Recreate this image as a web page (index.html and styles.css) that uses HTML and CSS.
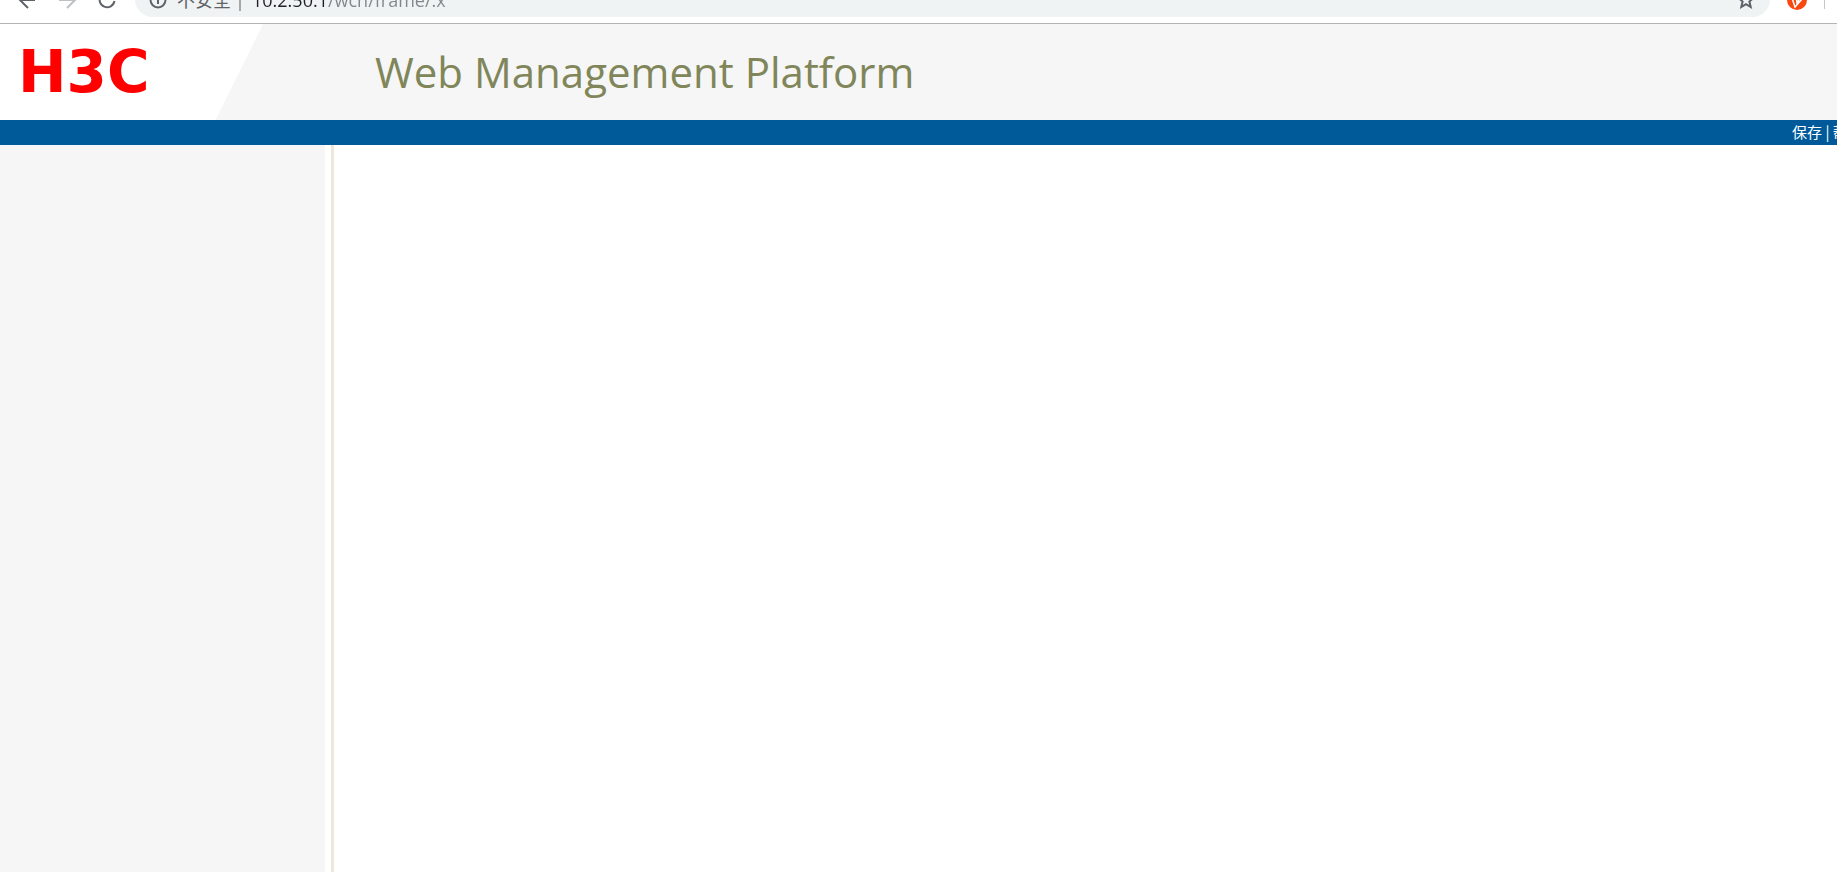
FILE: index.html
```html
<!DOCTYPE html>
<html lang="zh-CN">

	<head>
		<meta charset="UTF-8">
		<meta name="viewport" content="width=device-width, initial-scale=1.0">
		<title>Web Management Platform</title>
		<link rel="stylesheet" href="styles.css">
	</head>

	<body>

		<!-- 浏览器工具栏 -->
		<div class="toolbar">
			<button class="tool" type="button" aria-label="后退">
				<svg width="20" height="20" viewBox="0 0 20 20"><path d="M19 10H4M12 2l-8 8 8 8" /></svg>
			</button>
			<button class="tool disabled" type="button" aria-label="前进" disabled>
				<svg width="20" height="20" viewBox="0 0 20 20"><path d="M3 10h15M11 2l8 8-8 8" /></svg>
			</button>
			<button class="tool" type="button" aria-label="刷新">
				<svg width="20" height="20" viewBox="0 0 20 20"><path d="M18.500 11A7.500 7.500 0 1 1 16.500 4.500L18 6M18.500 1v6h-6" /></svg>
			</button>
			<div class="address">
				<svg class="info" width="18" height="18" viewBox="0 0 18 18"><circle cx="9" cy="9" r="7.500" /><path d="M9 8v5M9 4.500v2" /></svg>
				<label class="secure" for="url">不安全</label>
				<input class="url" id="url" type="text" value="10.2.50.1/wcn/frame/.x" spellcheck="false">
				<button class="star" type="button" aria-label="收藏">
					<svg width="18" height="18" viewBox="0 0 18 18"><path d="M9 1.500l2.100 5 5.400.5-4.100 3.500 1.300 5.500L9 13.200 4.300 16l1.300-5.500L1.500 7l5.400-.5z" /></svg>
				</button>
			</div>
			<button class="ext" type="button" aria-label="扩展程序">
				<svg width="20" height="20" viewBox="0 0 20 20"><circle cx="10" cy="10" r="10" fill="#f9480f" /><path d="M5 8l3 9L16 8M9 5l1 8L15 5" fill="none" stroke="#fff" stroke-width="1.500" /></svg>
			</button>
			<span class="divider"></span>
		</div>

		<!-- 页头 -->
		<div class="header">
			<div class="brand">H3C</div>
			<h1 class="title">Web Management Platform</h1>
		</div>

		<!-- 操作栏 -->
		<div class="navbar">
			<div class="links">
				<a href="#save">保存</a> | <a href="#help">帮助</a>
			</div>
		</div>

		<div class="container">
			<div class="sidebar"></div>
			<div class="content"></div>
		</div>

	</body>

</html>
```
FILE: styles.css
```css
* {
	box-sizing: border-box;
}

body {
	display: flex;
	flex-direction: column;
	min-height: 100vh;
	margin: 0;
	background-color: #fff;
	font-family: "Open Sans", "Noto Sans CJK SC", sans-serif;
	overflow-x: hidden;
}

button {
	padding: 0;
	border: 0;
	background: none;
}

svg {
	display: block;
}

/* 工具栏只露出下半部分 */
.toolbar {
	display: flex;
	align-items: flex-end;
	height: 24px;
	padding: 0 12px 6px 16px;
	border-bottom: 1px solid #b4b4b4;
	overflow: hidden;
}

.tool {
	display: flex;
	align-items: center;
	height: 34px;
	margin-right: 20px;
}

.tool svg {
	fill: none;
	stroke: #5f6368;
	stroke-width: 2;
}

.disabled svg {
	stroke: #bdc1c6;
}

.address {
	display: flex;
	flex: 1;
	align-items: center;
	height: 35px;
	margin-left: -1px;
	padding: 0 15px 0 14px;
	border-radius: 18px;
	background-color: #eff3f4;
}

.info,
.star svg {
	fill: none;
	stroke: #5f6368;
	stroke-width: 2;
}

.secure {
	margin-left: 10px;
	padding-right: 8px;
	border-right: 2px solid #a5a8ab;
	font-size: 18px;
	line-height: 22px;
	color: #5f6368;
}

/* 主机名深色，路径浅色 */
.url {
	flex: 1;
	min-width: 0;
	margin-left: 11px;
	padding: 0;
	border: 0;
	font-family: inherit;
	font-size: 18px;
	line-height: 22px;
	color: transparent;
	background: linear-gradient(to right, #202124 74px, #80868b 74px);
	-webkit-background-clip: text;
	background-clip: text;
}

.ext {
	display: flex;
	align-items: center;
	height: 35px;
	margin-left: 17px;
}

.divider {
	width: 1px;
	height: 20px;
	margin: 0 0 8px 17px;
	background-color: #c4c7ca;
}

.header {
	display: flex;
	align-items: center;
	height: 96px;
	background-color: #f6f6f6;
}

.brand {
	width: 263px;
	padding: 2px 0 2px 18px;
	background-color: #fff;
	clip-path: polygon(0 0, 100% 0, 82% 100%, 0 100%);
	font-family: "DejaVu Sans", sans-serif;
	font-size: 58px;
	line-height: 92px;
	font-weight: bold;
	color: #f00;
}

.title {
	margin: 0 0 0 112px;
	font-size: 42px;
	line-height: 62px;
	font-weight: normal;
	color: #80865a;
	white-space: nowrap;
}

.navbar {
	display: flex;
	justify-content: flex-end;
	height: 25px;
	background-color: #005a9a;
}

/* 窗口较窄时右侧的链接会被截掉 */
.links {
	width: 45px;
	overflow: hidden;
	font-family: "Noto Sans CJK SC", sans-serif;
	font-size: 15px;
	line-height: 24px;
	color: #fff;
	white-space: nowrap;
}

.links a {
	color: #fff;
	text-decoration: none;
}

.container {
	display: flex;
	flex: 1;
}

.sidebar {
	width: 325px;
	background-color: #f6f6f6;
}

.content {
	flex: 1;
	margin-left: 6px;
	border-left: 3px solid #eee8da;
}
```
